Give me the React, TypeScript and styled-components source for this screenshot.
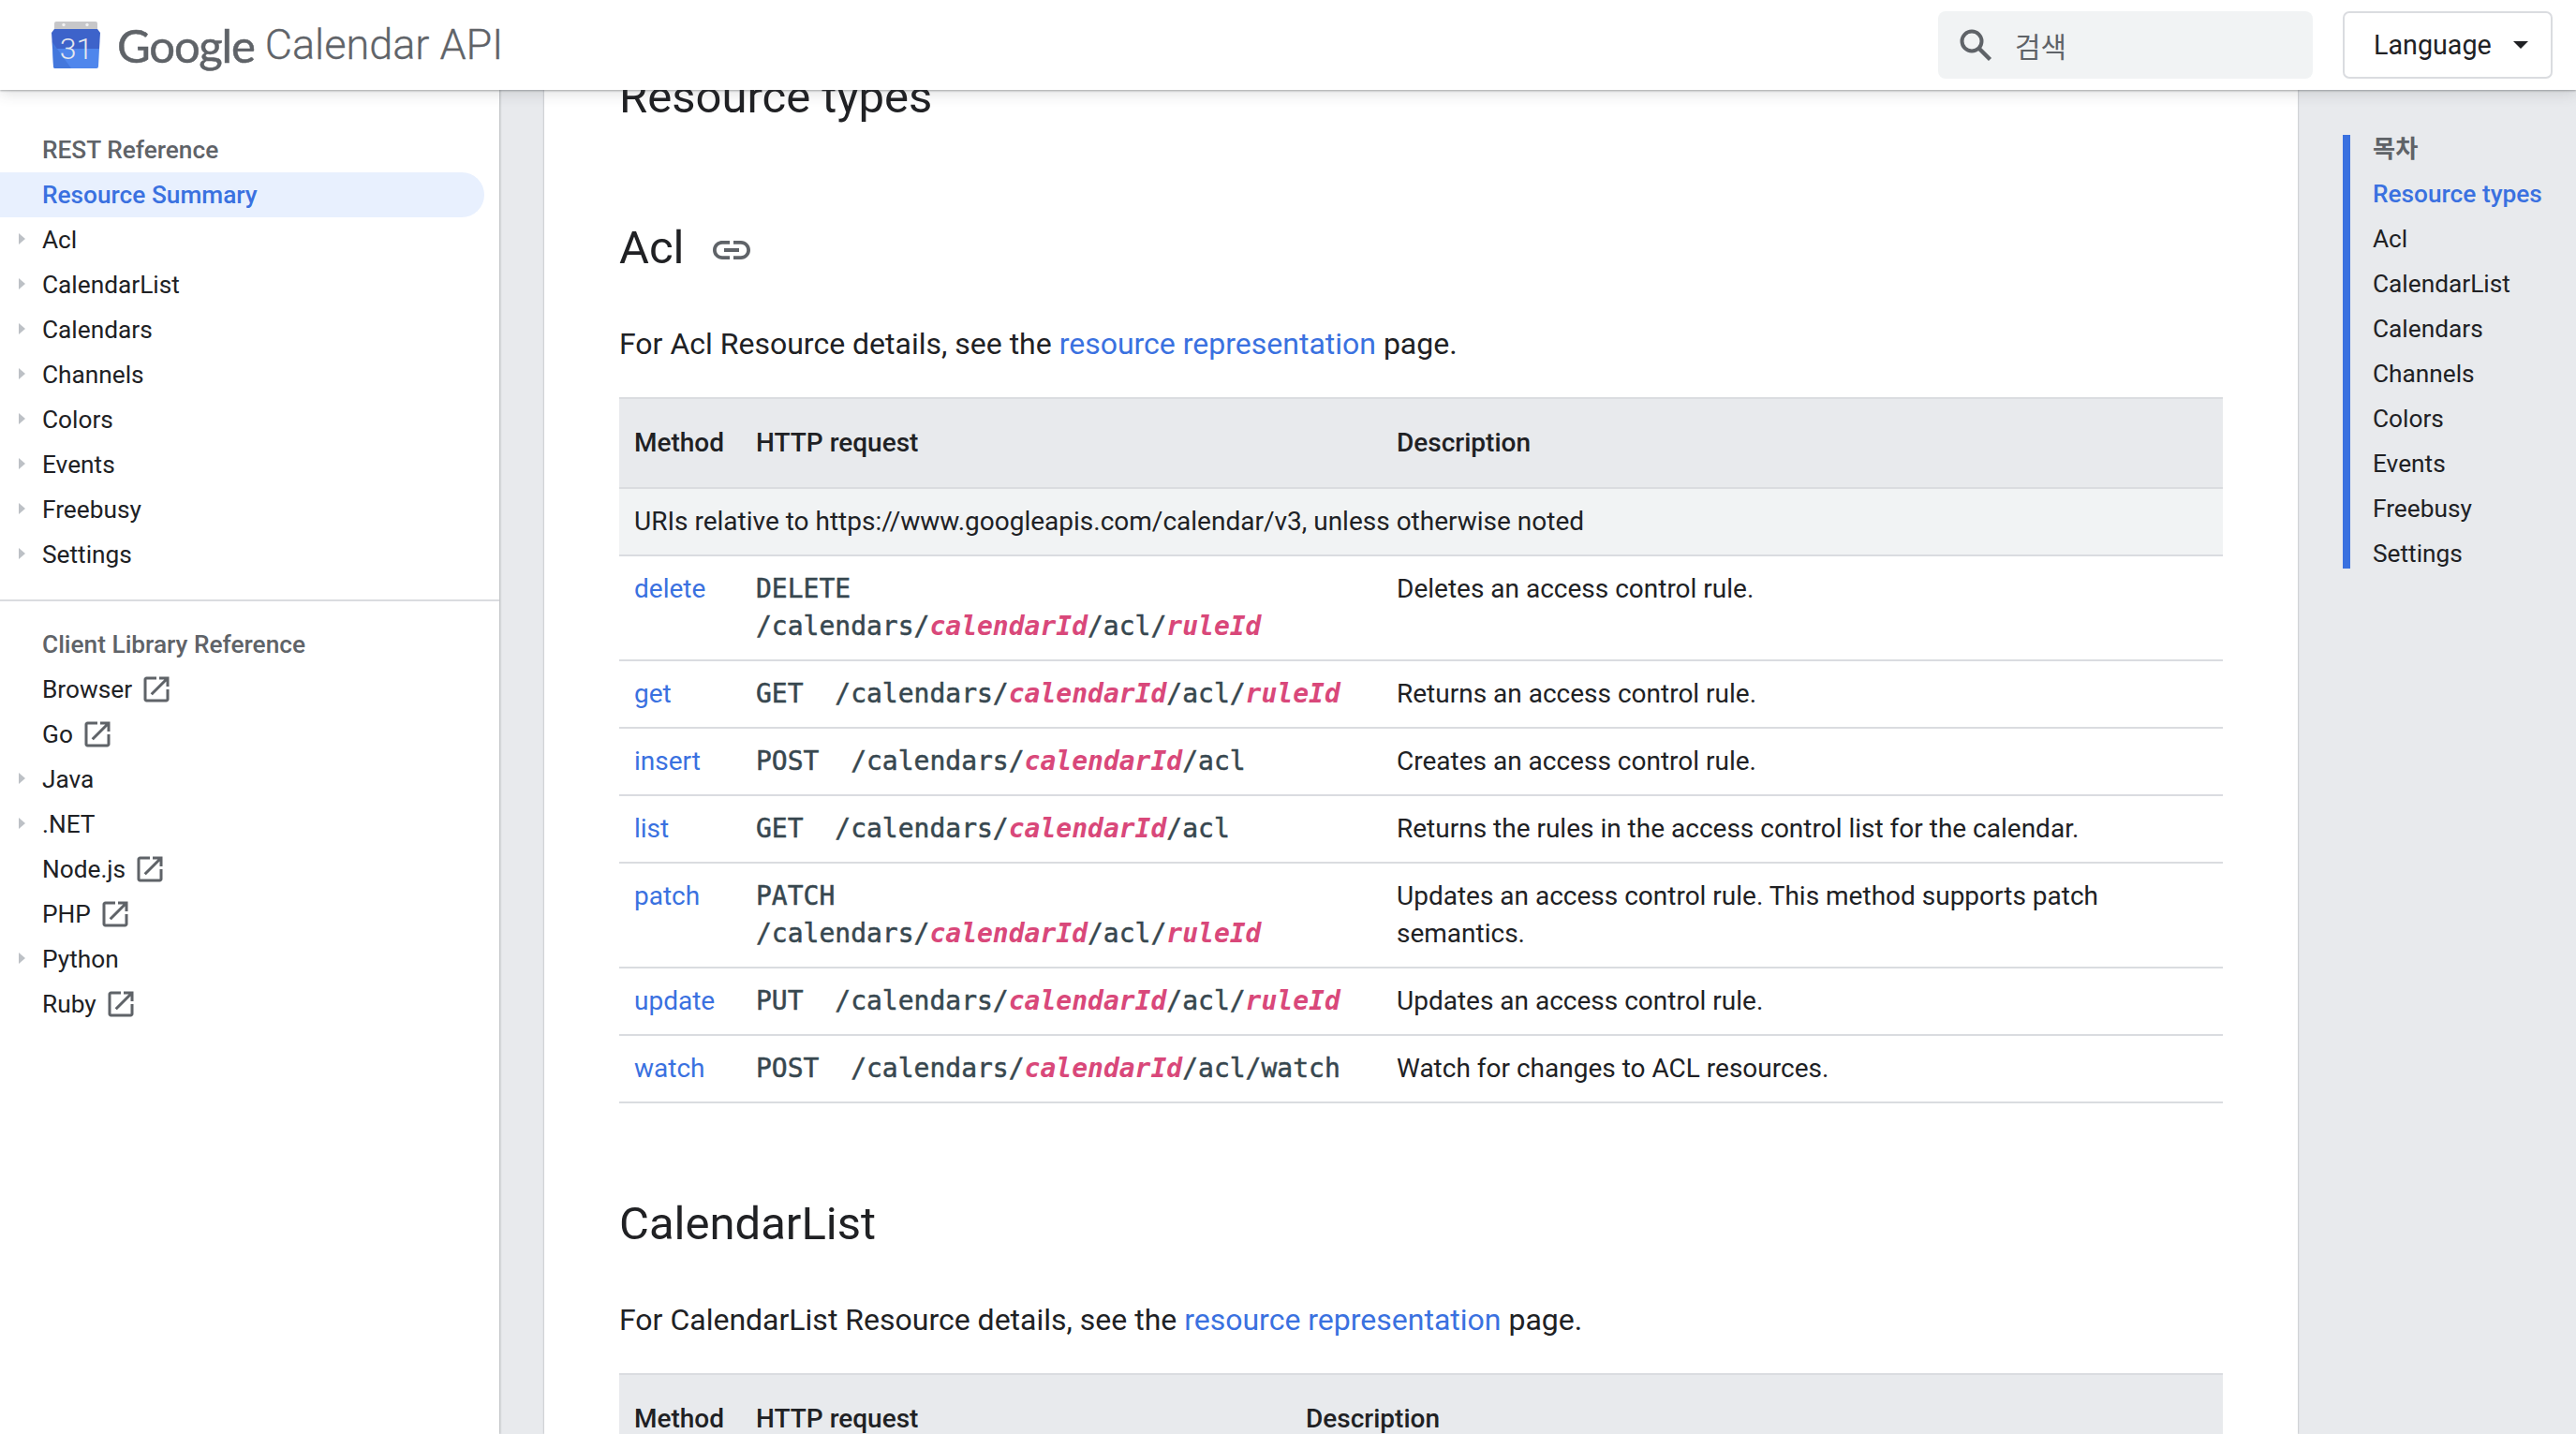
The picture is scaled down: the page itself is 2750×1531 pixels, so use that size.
import React from "react";
import styled, { createGlobalStyle } from "styled-components";

const Global = createGlobalStyle`
  html, body { margin: 0; padding: 0; background: #e8eaed; }
  body { font-family: Roboto, "Noto Sans CJK KR", sans-serif; color: #202124; }
  * { box-sizing: border-box; }
`;

const BLUE = "#3a71e0";

const Page = styled.div`
  width: 2750px;
  height: 1531px;
  display: flex;
  flex-direction: column;
  overflow: hidden;
`;
const TopBar = styled.header`
  position: relative;
  z-index: 3;
  height: 96px;
  flex: none;
  display: flex;
  align-items: center;
  padding: 0 25px 0 55px;
  background: #fff;
  box-shadow: 0 1px 2px rgba(60, 64, 67, 0.4), 0 4px 14px rgba(60, 64, 67, 0.16);
`;
const Brand = styled.div`
  display: flex;
  align-items: center;
  flex: 1;
  color: #5f6368;
`;
const GoogleWord = styled.span`
  font-family: Lato, Roboto, sans-serif;
  font-size: 49px;
  letter-spacing: -1.2px;
  line-height: 96px;
  margin-left: 18px;
  font-weight: 400;
  -webkit-text-stroke: 0.5px #5f6368;
`;
const ProductWord = styled.span`
  font-family: Roboto, sans-serif;
  font-size: 45px;
  margin-left: 11px;
  line-height: 96px;
  font-weight: 300;
  -webkit-text-stroke: 0.3px #5f6368;
`;
const SearchBox = styled.div`
  width: 400px;
  height: 72px;
  border-radius: 8px;
  background: #f1f3f4;
  display: flex;
  align-items: center;
  padding-left: 22px;
  gap: 24px;
  color: #5f6368;
  font-size: 30px;
  font-family: Roboto, "Noto Sans CJK KR", sans-serif;
`;
const LanguageButton = styled.div`
  width: 224px;
  height: 72px;
  margin-left: 32px;
  border: 2px solid #dadce0;
  border-radius: 7px;
  background: #fff;
  display: flex;
  align-items: center;
  padding-left: 31px;
  font-size: 28.7px;
  font-weight: 400;
  color: #202124;
`;
const Caret = styled.span`
  margin-left: 23px;
  width: 0;
  height: 0;
  border-left: 8px solid transparent;
  border-right: 8px solid transparent;
  border-top: 8px solid #202124;
`;
const Body = styled.div`
  flex: 1;
  min-height: 0;
  display: flex;
`;
const Sidebar = styled.nav`
  width: 533px;
  flex: none;
  background: #fff;
  padding-top: 40px;
  box-shadow: 1px 0 2px rgba(60, 64, 67, 0.3);
`;
const NavGroup = styled.div`
  & + & {
    margin-top: 24px;
    padding-top: 22px;
    border-top: 2px solid #dadce0;
  }
`;
const NavRow = styled.div<{ $active?: boolean; $heading?: boolean }>`
  display: flex;
  align-items: center;
  height: 48px;
  width: 517px;
  padding-left: 20px;
  font-size: 26.25px;
  border-radius: 0 24px 24px 0;
  font-weight: ${(p) => (p.$active || p.$heading ? 500 : 400)};
  color: ${(p) => (p.$active ? BLUE : p.$heading ? "#5f6368" : "#202124")};
  background: ${(p) => (p.$active ? "#e8f0fe" : "transparent")};
`;
const Arrow = styled.span<{ $show?: boolean }>`
  width: 25px;
  flex: none;
  display: flex;
  &::before {
    content: "";
    display: ${(p) => (p.$show ? "block" : "none")};
    margin-top: -2px;
    border-left: 7px solid #bdc1c6;
    border-top: 6.5px solid transparent;
    border-bottom: 6.5px solid transparent;
  }
`;
const ExternalIcon = styled.svg`
  width: 36px;
  height: 36px;
  margin-left: 8px;
  fill: #5f6368;
`;
const Main = styled.main`
  width: 1872px;
  margin-left: 48px;
  flex: none;
  background: #fff;
  padding: 0 80px;
  overflow: hidden;
  box-shadow: 0 0 2px rgba(60, 64, 67, 0.4);
`;
const PageHeading = styled.h2`
  margin: -28px 0 0;
  font-size: 49px;
  line-height: 72px;
  font-weight: 400;
`;
const SectionHeading = styled.h3<{ $top: number }>`
  display: flex;
  align-items: center;
  margin: ${(p) => p.$top}px 0 0;
  font-size: 49px;
  line-height: 70px;
  font-weight: 400;
`;
const LinkIcon = styled.svg`
  width: 48px;
  height: 48px;
  margin-left: 26px;
  margin-top: 4px;
  fill: #5f6368;
`;
const Intro = styled.p`
  margin: 47px 0 0;
  font-size: 32px;
  line-height: 40px;
`;
const Anchor = styled.a`
  color: ${BLUE};
`;
const Table = styled.table`
  width: 1712px;
  margin-top: 37px;
  border-collapse: collapse;
  table-layout: fixed;
  font-size: 28px;
  line-height: 40px;
`;
const HeadCell = styled.th`
  height: 96px;
  padding: 0 16px;
  background: #e8eaed;
  font-weight: 500;
  text-align: left;
  border-top: 2px solid #dadce0;
  border-bottom: 2px solid #dadce0;
`;
const NoteCell = styled.td`
  height: 72px;
  padding: 0 16px;
  background: #f1f3f4;
  border-bottom: 2px solid #dadce0;
`;
const Cell = styled.td`
  padding: 15px 16px;
  vertical-align: top;
  border-bottom: 2px solid #dadce0;
`;
const Code = styled.code`
  font-family: "DejaVu Sans Mono", "Liberation Mono", monospace;
  font-size: 28px;
  color: #37474f;
  white-space: pre-wrap;
  -webkit-text-stroke: 0.5px #37474f;
`;
const Var = styled.var`
  font-weight: 700;
  font-style: italic;
  color: #d9487a;
  -webkit-text-stroke: 0;
`;
const Toc = styled.aside`
  flex: 1;
  padding: 48px 0 0 48px;
`;
const TocList = styled.div`
  display: flex;
  flex-direction: column;
  gap: 20px;
  border-left: 8px solid ${BLUE};
  padding: 1px 0 2px 24px;
`;
const TocItem = styled.div<{ $active?: boolean; $heading?: boolean }>`
  font-size: 26.25px;
  line-height: 28px;
  font-weight: ${(p) => (p.$heading ? 700 : p.$active ? 500 : 400)};
  color: ${(p) => (p.$active ? BLUE : p.$heading ? "#5f6368" : "#202124")};
`;

const CalendarLogo = () => (
  <svg width="52" height="50" viewBox="0 0 52 50">
    <path d="M3 8V2a2 2 0 0 1 2-2h42a2 2 0 0 1 2 2v6z" fill="#c7c7c9" />
    <circle cx="13" cy="3.5" r="1.7" fill="#f1f1f1" />
    <circle cx="38" cy="3.5" r="1.7" fill="#f1f1f1" />
    <path d="M3 8h46l3 4-1 17H1L0 12z" fill="#3d63ca" />
    <path d="M1 29h50l-1 19a2 2 0 0 1-2 2H4a2 2 0 0 1-2-2z" fill="#4f86ec" />
    <path d="M1 22l20 28H4a2 2 0 0 1-2-2z" fill="#4377dc" />
    <text x="26.5" y="40" textAnchor="middle" fontFamily="Roboto, sans-serif" fontWeight="300" fontSize="32" fill="#e6e8ee">31</text>
  </svg>
);

const SearchGlyph = () => (
  <svg width="36" height="36" viewBox="0 0 36 36" fill="none" stroke="#5f6368">
    <circle cx="14" cy="14" r="10.5" strokeWidth="4" />
    <path d="M21.5 21.5L33.5 33.5" strokeWidth="4.4" />
  </svg>
);

const External = () => (
  <ExternalIcon viewBox="0 0 24 24">
    <path d="M19 19H5V5h7V3H5c-1.11 0-2 .9-2 2v14c0 1.1.89 2 2 2h14c1.1 0 2-.9 2-2v-7h-2v7zM14 3v2h3.59l-9.83 9.83 1.41 1.41L19 6.41V10h2V3h-7z" />
  </ExternalIcon>
);

const restNav = ["Acl", "CalendarList", "Calendars", "Channels", "Colors", "Events", "Freebusy", "Settings"];
const clientNav: { label: string; arrow?: boolean; ext?: boolean }[] = [
  { label: "Browser", ext: true },
  { label: "Go", ext: true },
  { label: "Java", arrow: true },
  { label: ".NET", arrow: true },
  { label: "Node.js", ext: true },
  { label: "PHP", ext: true },
  { label: "Python", arrow: true },
  { label: "Ruby", ext: true },
];

type Row = { name: string; verb: string; path: React.ReactNode; wrap?: boolean; desc: string };

const CID = <Var>calendarId</Var>;
const RID = <Var>ruleId</Var>;
const aclRows: Row[] = [
  { name: "delete", verb: "DELETE", wrap: true, path: <>/calendars/{CID}/acl/{RID}</>, desc: "Deletes an access control rule." },
  { name: "get", verb: "GET", path: <>/calendars/{CID}/acl/{RID}</>, desc: "Returns an access control rule." },
  { name: "insert", verb: "POST", path: <>/calendars/{CID}/acl</>, desc: "Creates an access control rule." },
  { name: "list", verb: "GET", path: <>/calendars/{CID}/acl</>, desc: "Returns the rules in the access control list for the calendar." },
  { name: "patch", verb: "PATCH", wrap: true, path: <>/calendars/{CID}/acl/{RID}</>, desc: "Updates an access control rule. This method supports patch semantics." },
  { name: "update", verb: "PUT", path: <>/calendars/{CID}/acl/{RID}</>, desc: "Updates an access control rule." },
  { name: "watch", verb: "POST", path: <>/calendars/{CID}/acl/watch</>, desc: "Watch for changes to ACL resources." },
];

const Head = ({ http }: { http: number }) => (
  <>
    <colgroup>
      <col style={{ width: 130 }} />
      <col style={{ width: http }} />
      <col />
    </colgroup>
    <thead>
      <tr>
        <HeadCell>Method</HeadCell>
        <HeadCell>HTTP request</HeadCell>
        <HeadCell>Description</HeadCell>
      </tr>
    </thead>
  </>
);

export default function App() {
  return (
    <Page>
      <Global />
      <TopBar>
        <Brand>
          <CalendarLogo />
          <GoogleWord>Google</GoogleWord>
          <ProductWord>Calendar API</ProductWord>
        </Brand>
        <SearchBox>
          <SearchGlyph />
          <span>검색</span>
        </SearchBox>
        <LanguageButton>
          Language
          <Caret />
        </LanguageButton>
      </TopBar>
      <Body>
        <Sidebar>
          <NavGroup>
            <NavRow $heading><Arrow />REST Reference</NavRow>
            <NavRow $active><Arrow />Resource Summary</NavRow>
            {restNav.map((n) => (
              <NavRow key={n}><Arrow $show />{n}</NavRow>
            ))}
          </NavGroup>
          <NavGroup>
            <NavRow $heading><Arrow />Client Library Reference</NavRow>
            {clientNav.map((n) => (
              <NavRow key={n.label}>
                <Arrow $show={n.arrow} />
                {n.label}
                {n.ext && <External />}
              </NavRow>
            ))}
          </NavGroup>
        </Sidebar>
        <Main>
          <PageHeading>Resource types</PageHeading>
          <SectionHeading $top={90}>
            Acl
            <LinkIcon viewBox="0 0 24 24">
              <path d="M3.9 12c0-1.71 1.39-3.1 3.1-3.1h4V7H7c-2.76 0-5 2.24-5 5s2.24 5 5 5h4v-1.9H7c-1.71 0-3.1-1.39-3.1-3.1zM8 13h8v-2H8v2zm9-6h-4v1.9h4c1.71 0 3.1 1.39 3.1 3.1s-1.39 3.1-3.1 3.1h-4V17h4c2.76 0 5-2.24 5-5s-2.24-5-5-5z" />
            </LinkIcon>
          </SectionHeading>
          <Intro>
            For Acl Resource details, see the <Anchor>resource representation</Anchor> page.
          </Intro>
          <Table>
            <Head http={684} />
            <tbody>
              <tr>
                <NoteCell colSpan={3}>
                  URIs relative to https://www.googleapis.com/calendar/v3, unless otherwise noted
                </NoteCell>
              </tr>
              {aclRows.map((r) => (
                <tr key={r.name}>
                  <Cell><Anchor>{r.name}</Anchor></Cell>
                  <Cell>
                    <Code>
                      {r.verb}
                      {r.wrap ? <br /> : "  "}
                      {r.path}
                    </Code>
                  </Cell>
                  <Cell>{r.desc}</Cell>
                </tr>
              ))}
            </tbody>
          </Table>
          <SectionHeading $top={94}>CalendarList</SectionHeading>
          <Intro>
            For CalendarList Resource details, see the <Anchor>resource representation</Anchor> page.
          </Intro>
          <Table>
            <Head http={587} />
          </Table>
        </Main>
        <Toc>
          <TocList>
            <TocItem $heading>목차</TocItem>
            <TocItem $active>Resource types</TocItem>
            {restNav.map((n) => (
              <TocItem key={n}>{n}</TocItem>
            ))}
          </TocList>
        </Toc>
      </Body>
    </Page>
  );
}
